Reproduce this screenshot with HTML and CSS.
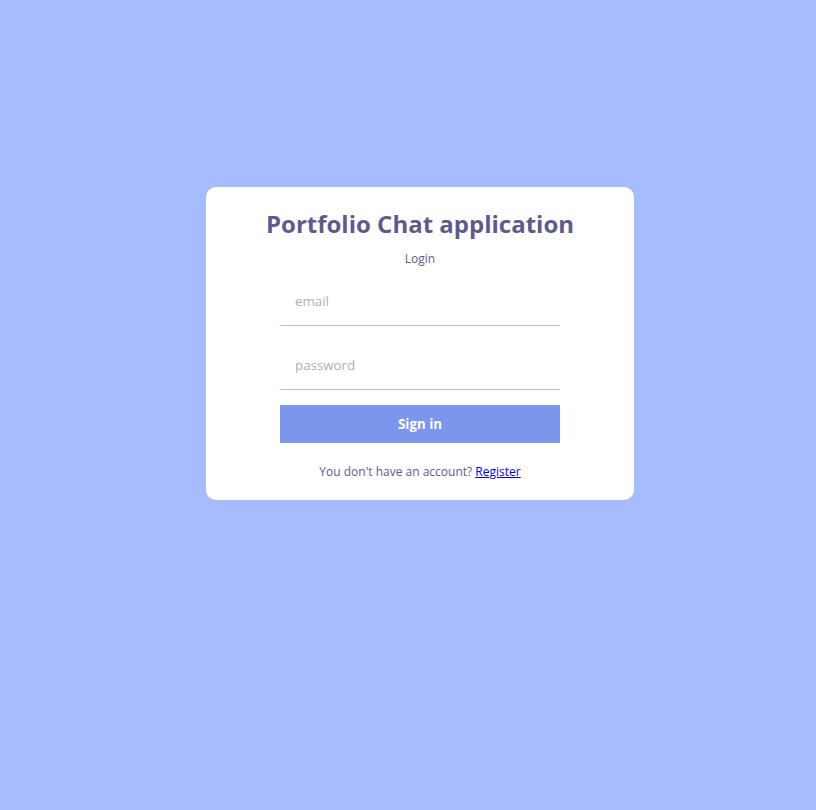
FILE: index.html
```html
<!DOCTYPE html>
<html>
<head>
<meta charset="utf-8">
<link rel="stylesheet" href="styles.css">
</head>
<body>
<div class="formContainer">
  <div class="formWrapper">
    <span class="logo">Portfolio Chat application</span>
    <span class="title">Login</span>
    <form>
      <input type="email" placeholder="email">
      <input type="password" placeholder="password">
      <button type="button">Sign in</button>
    </form>
    <p>You don't have an account? <a href="#">Register</a></p>
  </div>
</div>
</body>
</html>
```
FILE: styles.css
```css
* { box-sizing: content-box; }
html, body { margin: 0; padding: 0; }
body {
  font-family: "Open Sans", "DejaVu Sans", sans-serif;
  background: #a7bcff;
  height: 810px;
}
.formContainer {
  display: flex;
  justify-content: center;
  align-items: flex-start;
  padding-top: 187px;
  padding-left: 24px;
}
.formWrapper {
  background: #fff;
  padding: 20px 60px;
  border-radius: 10px;
  display: flex;
  flex-direction: column;
  gap: 10px;
  align-items: center;
}
.logo {
  color: #5d5b8d;
  font-weight: bold;
  font-size: 24px;
}
.title {
  color: #5d5b8d;
  font-size: 12px;
}
form {
  display: flex;
  flex-direction: column;
  gap: 15px;
}
input {
  font-family: "Open Sans", "DejaVu Sans", sans-serif;
  font-size: 13.333px;
  padding: 15px;
  border: none;
  width: 250px;
  border-bottom: 1px solid #a7bcff;
  outline: none;
}
input::placeholder { color: rgb(175, 175, 175); }
button {
  font-family: "Open Sans", "DejaVu Sans", sans-serif;
  font-size: 13.333px;
  background: #7b96ec;
  color: #fff;
  padding: 10px;
  font-weight: bold;
  border: none;
  cursor: pointer;
}
p {
  color: #5d5b8d;
  font-size: 12px;
  margin: 10px 0 0 0;
}
a { color: #0000ee; }
```
